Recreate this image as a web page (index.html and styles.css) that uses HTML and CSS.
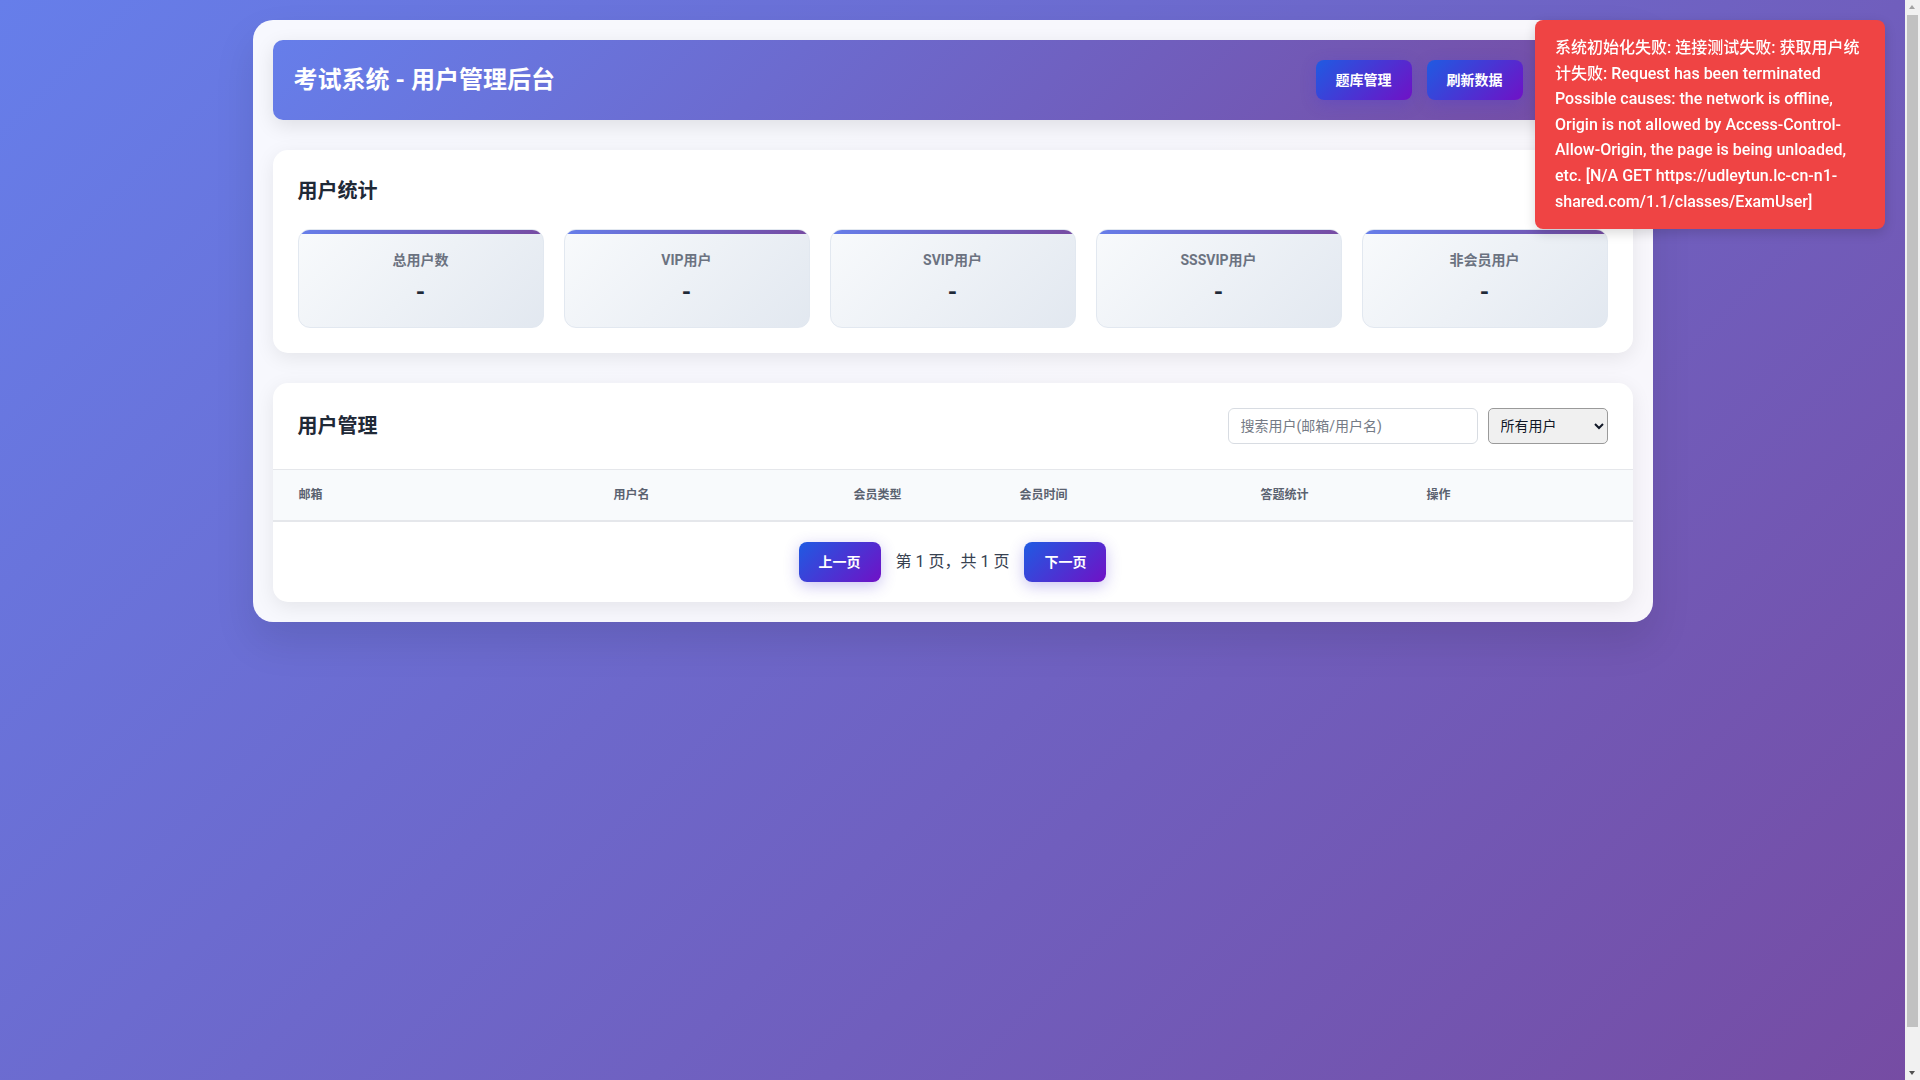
FILE: index.html
```html
<!DOCTYPE html>
<html lang="zh-CN">
<head>
<meta charset="UTF-8">
<title>考试系统 - 用户管理后台</title>
<link rel="stylesheet" href="styles.css">
</head>
<body>
<div class="container">
  <header class="header">
    <h1 class="title">考试系统 - 用户管理后台</h1>
    <div class="header-actions">
      <button class="btn">题库管理</button>
      <button class="btn">刷新数据</button>
    </div>
  </header>

  <section class="card stats">
    <h2 class="section-title stats-title">用户统计</h2>
    <div class="stats-grid">
      <div class="stat-card"><div class="stat-label">总用户数</div><div class="stat-value">-</div></div>
      <div class="stat-card"><div class="stat-label">VIP用户</div><div class="stat-value">-</div></div>
      <div class="stat-card"><div class="stat-label">SVIP用户</div><div class="stat-value">-</div></div>
      <div class="stat-card"><div class="stat-label">SSSVIP用户</div><div class="stat-value">-</div></div>
      <div class="stat-card"><div class="stat-label">非会员用户</div><div class="stat-value">-</div></div>
    </div>
  </section>

  <section class="card users">
    <div class="card-head">
      <h2 class="section-title">用户管理</h2>
      <div class="filters">
        <input class="search" type="text" placeholder="搜索用户(邮箱/用户名)">
        <select class="filter-select">
          <option>所有用户</option>
          <option>VIP用户</option>
          <option>SVIP用户</option>
          <option>SSSVIP用户</option>
          <option>非会员用户</option>
        </select>
      </div>
    </div>
    <table class="user-table">
      <colgroup>
        <col class="c1"><col class="c2"><col class="c3"><col class="c4"><col class="c5"><col class="c6">
      </colgroup>
      <thead>
        <tr>
          <th>邮箱</th>
          <th>用户名</th>
          <th>会员类型</th>
          <th>会员时间</th>
          <th>答题统计</th>
          <th>操作</th>
        </tr>
      </thead>
      <tbody></tbody>
    </table>
    <div class="pagination">
      <button class="btn">上一页</button>
      <span class="page-info">第 1 页，共 1 页</span>
      <button class="btn">下一页</button>
    </div>
  </section>
</div>

<div class="toast">系统初始化失败: 连接测试失败: 获取用户统计失败: Request has been terminated Possible causes: the network is offline, Origin is not allowed by Access-Control-Allow-Origin, the page is being unloaded, etc. [N/A GET https://udleytun.lc-cn-n1-shared.com/1.1/classes/ExamUser]</div>

<div class="scrollbar" aria-hidden="true">
  <div class="sb-arrow sb-up"></div>
  <div class="sb-track"><div class="sb-thumb"></div></div>
  <div class="sb-arrow sb-down"></div>
</div>
</body>
</html>
```

FILE: styles.css
```css
* {
  box-sizing: border-box;
}

html {
  margin: 0;
}

body {
  margin: 0;
  padding: 20px 35px 20px 20px;
  min-height: 100vh;
  box-sizing: content-box;
  font-family: Roboto, "Noto Sans CJK SC", "Noto Sans", sans-serif;
  background: linear-gradient(135deg, #667eea 0%, #764ba2 100%);
  color: #1f2937;
}

.container {
  max-width: 1400px;
  margin: 0 auto;
  padding: 20px;
  background: rgba(255, 255, 255, 0.95);
  border-radius: 20px;
  box-shadow: 0 20px 40px rgba(0, 0, 0, 0.1);
  display: flex;
  flex-direction: column;
  gap: 30px;
}

/* Header */
.header {
  display: flex;
  justify-content: space-between;
  align-items: center;
  padding: 20px 20px 20px 21px;
  border-radius: 10px;
  background: linear-gradient(135deg, #667eea 0%, #764ba2 100%);
  box-shadow: 0 6px 20px rgba(0, 0, 0, 0.1);
}

.title {
  margin: 0;
  font-size: 24px;
  line-height: 40px;
  font-weight: 700;
  color: #ffffff;
}

.header-actions {
  display: flex;
  gap: 15px;
  margin-right: 90px;
}

.btn {
  font-family: inherit;
  font-size: 14px;
  line-height: 20px;
  font-weight: 700;
  color: #ffffff;
  padding: 10px 20px;
  border: none;
  border-radius: 8px;
  background: linear-gradient(135deg, #1f5be2 0%, #7011c6 100%);
  box-shadow: 0 4px 15px rgba(76, 56, 210, 0.3);
  cursor: pointer;
}

/* Cards */
.card {
  background: #ffffff;
  border-radius: 15px;
  box-shadow: 0 5px 20px rgba(0, 0, 0, 0.08);
}

.stats {
  padding: 25px;
}

.section-title {
  margin: 0;
  font-size: 20px;
  font-weight: 700;
  line-height: 32px;
  color: #1f2937;
}

.stats-title {
  margin-bottom: 22px;
}

.stats-grid {
  display: grid;
  grid-template-columns: repeat(5, 1fr);
  gap: 20px;
}

.stat-card {
  position: relative;
  overflow: hidden;
  padding: 20px;
  text-align: center;
  border: 1px solid #e2e8f0;
  border-radius: 12px;
  background: linear-gradient(135deg, #f8fafc 0%, #e2e8f0 100%);
}

.stat-card::before {
  content: "";
  position: absolute;
  top: 0;
  left: 0;
  right: 0;
  height: 4px;
  background: linear-gradient(90deg, #667eea 0%, #764ba2 100%);
}

.stat-label {
  font-size: 14px;
  line-height: 21px;
  font-weight: 700;
  color: #6b7280;
  margin-bottom: 7px;
}

.stat-value {
  font-size: 24px;
  line-height: 29px;
  font-weight: 700;
  color: #1f2937;
}

/* Users */
.users {
  overflow: hidden;
}

.card-head {
  display: flex;
  justify-content: space-between;
  align-items: center;
  padding: 25px;
}

.filters {
  display: flex;
  gap: 10px;
}

.search {
  width: 250px;
  height: 36px;
  padding: 0 12px;
  font-family: inherit;
  font-size: 14px;
  color: #374151;
  border: 1px solid #d8dce2;
  border-radius: 6px;
  background: #ffffff;
  outline: none;
}

.search::placeholder {
  color: #757b86;
}

.filter-select {
  width: 120px;
  height: 36px;
  padding: 0 8px;
  font-family: inherit;
  font-size: 14px;
  color: #111827;
  border: 1px solid #9a9a9a;
  border-radius: 5px;
  background-color: #f0f0f0;
}

.user-table {
  width: 100%;
  border-collapse: collapse;
  table-layout: fixed;
}

.c1 { width: 315px; }
.c2 { width: 240px; }
.c3 { width: 166px; }
.c4 { width: 241px; }
.c5 { width: 166px; }

.user-table thead tr {
  background: #f8fafc;
  border-top: 1px solid #e5e7eb;
  border-bottom: 2px solid #e5e7eb;
}

.user-table th {
  padding: 15px 10px 15px 26px;
  text-align: left;
  font-size: 12px;
  line-height: 20px;
  font-weight: 700;
  color: #5b6270;
}

.pagination {
  display: flex;
  justify-content: center;
  align-items: center;
  gap: 15px;
  padding: 20px;
}

.page-info {
  font-size: 16px;
  line-height: 24px;
  color: #374151;
}

/* Toast */
.toast {
  position: fixed;
  top: 20px;
  right: 35px;
  width: 350px;
  padding: 15px 20px;
  background: #ef4444;
  color: #ffffff;
  font-size: 16px;
  line-height: 25.6px;
  font-weight: 500;
  border-radius: 8px;
  box-shadow: 0 4px 12px rgba(0, 0, 0, 0.15);
  z-index: 1000;
}

/* Window scrollbar (browser chrome) */
.scrollbar {
  position: fixed;
  top: 0;
  right: 0;
  bottom: 0;
  width: 15px;
  background: #f1f1f1;
  display: flex;
  flex-direction: column;
  z-index: 2000;
}

.sb-arrow {
  height: 15px;
  flex: none;
  position: relative;
}

.sb-arrow::after {
  content: "";
  position: absolute;
  left: 4px;
  border-left: 3.5px solid transparent;
  border-right: 3.5px solid transparent;
}

.sb-up::after {
  top: 5px;
  border-bottom: 4px solid #a3a3a3;
}

.sb-down::after {
  top: 6px;
  border-top: 4px solid #505050;
}

.sb-track {
  flex: 1;
  padding: 0 2px;
}

.sb-thumb {
  height: 96.4%;
  background: #c1c1c1;
}
```
